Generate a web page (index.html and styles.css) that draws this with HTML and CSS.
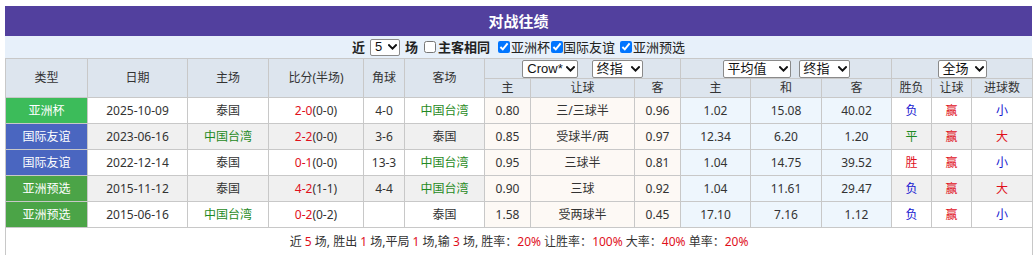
FILE: index.html
```html
<!DOCTYPE html>
<html lang="zh-CN">
<head>
<meta charset="utf-8">
<title>对战往绩</title>
<link rel="stylesheet" href="styles.css">
</head>
<body>
<div class="panel">
  <div class="title">对战往绩</div>
  <div class="filter">
    <b class="f-near">近</b>
    <span class="sel sel-n">5<svg class="chev" viewBox="0 0 9 6" width="9" height="6"><polyline points="1,1.1 4.5,4.6 8,1.1"/></svg></span>
    <b class="f-chang">场</b>
    <label class="chk chk-same"><input type="checkbox"><b>主客相同</b></label>
    <label class="chk chk-cup"><input type="checkbox" checked>亚洲杯</label>
    <label class="chk chk-fr"><input type="checkbox" checked>国际友谊</label>
    <label class="chk chk-q"><input type="checkbox" checked>亚洲预选</label>
  </div>
  <table class="grid">
    <colgroup>
      <col class="c-type"><col class="c-date"><col class="c-home"><col class="c-score"><col class="c-corner"><col class="c-away">
      <col class="c-o1"><col class="c-hc"><col class="c-o1">
      <col class="c-o2"><col class="c-o2m"><col class="c-o2">
      <col class="c-r"><col class="c-r"><col class="c-goal">
    </colgroup>
    <thead>
      <tr class="h1">
        <th rowspan="2">类型</th>
        <th rowspan="2">日期</th>
        <th rowspan="2">主场</th>
        <th rowspan="2">比分(半场)</th>
        <th rowspan="2">角球</th>
        <th rowspan="2">客场</th>
        <th colspan="3"><div class="sels gap14"><span class="sel w52"><span class="st">Crow*</span><svg class="chev" viewBox="0 0 9 6" width="9" height="6"><polyline points="1,1.1 4.5,4.6 8,1.1"/></svg></span><span class="sel w51"><span class="st">终指</span><svg class="chev" viewBox="0 0 9 6" width="9" height="6"><polyline points="1,1.1 4.5,4.6 8,1.1"/></svg></span></div></th>
        <th colspan="3"><div class="sels gap8"><span class="sel w68"><span class="st">平均值</span><svg class="chev" viewBox="0 0 9 6" width="9" height="6"><polyline points="1,1.1 4.5,4.6 8,1.1"/></svg></span><span class="sel w51"><span class="st">终指</span><svg class="chev" viewBox="0 0 9 6" width="9" height="6"><polyline points="1,1.1 4.5,4.6 8,1.1"/></svg></span></div></th>
        <th colspan="3"><div class="sels"><span class="sel w49"><span class="st">全场</span><svg class="chev" viewBox="0 0 9 6" width="9" height="6"><polyline points="1,1.1 4.5,4.6 8,1.1"/></svg></span></div></th>
      </tr>
      <tr class="h2">
        <th>主</th><th>让球</th><th>客</th>
        <th>主</th><th>和</th><th>客</th>
        <th>胜负</th><th>让球</th><th>进球数</th>
      </tr>
    </thead>
    <tbody>
      <tr>
        <td class="type t-cup">亚洲杯</td>
        <td>2025-10-09</td>
        <td>泰国</td>
        <td><span class="red">2-0</span>(0-0)</td>
        <td>4-0</td>
        <td class="green">中国台湾</td>
        <td class="o1">0.80</td><td class="o1">三/三球半</td><td class="o1">0.96</td>
        <td class="o2">1.02</td><td class="o2">15.08</td><td class="o2">40.02</td>
        <td class="blue">负</td><td class="red">赢</td><td class="blue">小</td>
      </tr>
      <tr class="alt">
        <td class="type t-friendly">国际友谊</td>
        <td>2023-06-16</td>
        <td class="green">中国台湾</td>
        <td><span class="red">2-2</span>(0-0)</td>
        <td>3-6</td>
        <td>泰国</td>
        <td class="o1">0.85</td><td class="o1">受球半/两</td><td class="o1">0.97</td>
        <td class="o2">12.34</td><td class="o2">6.20</td><td class="o2">1.20</td>
        <td class="green">平</td><td class="red">赢</td><td class="red">大</td>
      </tr>
      <tr>
        <td class="type t-friendly">国际友谊</td>
        <td>2022-12-14</td>
        <td>泰国</td>
        <td><span class="red">0-1</span>(0-0)</td>
        <td>13-3</td>
        <td class="green">中国台湾</td>
        <td class="o1">0.95</td><td class="o1">三球半</td><td class="o1">0.81</td>
        <td class="o2">1.04</td><td class="o2">14.75</td><td class="o2">39.52</td>
        <td class="red">胜</td><td class="red">赢</td><td class="blue">小</td>
      </tr>
      <tr class="alt">
        <td class="type t-qual">亚洲预选</td>
        <td>2015-11-12</td>
        <td>泰国</td>
        <td><span class="red">4-2</span>(1-1)</td>
        <td>4-4</td>
        <td class="green">中国台湾</td>
        <td class="o1">0.90</td><td class="o1">三球</td><td class="o1">0.92</td>
        <td class="o2">1.04</td><td class="o2">11.61</td><td class="o2">29.47</td>
        <td class="blue">负</td><td class="red">赢</td><td class="red">大</td>
      </tr>
      <tr>
        <td class="type t-qual">亚洲预选</td>
        <td>2015-06-16</td>
        <td class="green">中国台湾</td>
        <td><span class="red">0-2</span>(0-2)</td>
        <td></td>
        <td>泰国</td>
        <td class="o1">1.58</td><td class="o1">受两球半</td><td class="o1">0.45</td>
        <td class="o2">17.10</td><td class="o2">7.16</td><td class="o2">1.12</td>
        <td class="blue">负</td><td class="red">赢</td><td class="blue">小</td>
      </tr>
      <tr class="foot">
        <td colspan="15">近 <span class="red">5</span> 场, 胜出 <span class="red">1</span> 场,平局 <span class="red">1</span> 场,输 <span class="red">3</span> 场, 胜率：<span class="red">20%</span> 让胜率：<span class="red">100%</span> 大率：<span class="red">40%</span> 单率：<span class="red">20%</span></td>
      </tr>
    </tbody>
  </table>
</div>
</body>
</html>
```

FILE: styles.css
```css
* { box-sizing: border-box; }
html, body { margin: 0; padding: 0; background: #fff; }
body {
  font-family: "Noto Sans", "Noto Sans CJK SC", sans-serif;
  font-size: 12px;
  color: #333;
}
.panel {
  width: 1027px;
  margin: 6px 0 0 5px;
}
.title {
  height: 30px;
  background: #52409e;
  color: #fff;
  font-size: 15px;
  font-weight: bold;
  text-align: center;
  line-height: 30px;
}
.filter {
  height: 22px;
  background: #e7f0fa;
  display: flex;
  align-items: center;
  justify-content: center;
  font-size: 13px;
  color: #222;
  line-height: 16px;
}
.filter b { font-weight: bold; color: #222; }
.f-near { margin-right: 5px; }
.f-chang { margin-left: 5px; }
.chk { display: inline-flex; align-items: center; }
.chk input {
  width: 12px;
  height: 12px;
  margin: 0 1px 0 0;
}
.chk-same { margin-left: 6px; }
.chk-same input { margin-right: 2px; }
.chk-cup { margin-left: 8px; }
.chk-fr { margin-left: 1px; }
.chk-fr input { margin-right: 0; }
.chk-q { margin-left: 5px; }
.sel {
  display: inline-flex;
  align-items: center;
  justify-content: space-between;
  gap: 3px;
  height: 18px;
  padding: 0 1px 0 4px;
  background: #fff;
  border: 1px solid #8a8a8a;
  border-radius: 2px;
  font-family: "Liberation Sans", "Noto Sans CJK SC", sans-serif;
  font-size: 13px;
  color: #111;
  line-height: 16px;
  white-space: nowrap;
}
.st { flex: none; }
.sel-n { width: 30px; height: 17px; padding-left: 4px; }
.w52 { min-width: 52px; }
.w51 { min-width: 51px; }
.w68 { min-width: 68px; }
.w49 { min-width: 49px; }
.chev {
  fill: none;
  stroke: #111;
  stroke-width: 2;
  stroke-linecap: square;
  flex: none;
  margin-right: 1px;
}
.sels {
  display: flex;
  justify-content: center;
  align-items: center;
}
.gap14 { gap: 14px; }
.gap8 { gap: 8px; }

.grid {
  width: 1027px;
  border-collapse: collapse;
  table-layout: fixed;
}
.c-type { width: 82px; }
.c-date { width: 100px; }
.c-home { width: 81px; }
.c-score { width: 95px; }
.c-corner { width: 41px; }
.c-away { width: 80px; }
.c-o1 { width: 46px; }
.c-hc { width: 104px; }
.c-o2 { width: 70px; }
.c-o2m { width: 71px; }
.c-r { width: 40px; }
.c-goal { width: 61px; }

.grid th, .grid td {
  border: 1px solid #c8c8c8;
  text-align: center;
  padding: 0;
  white-space: nowrap;
  line-height: 16px;
}
.grid th {
  background: #dde5ee;
  font-weight: normal;
  color: #333;
}
.h1 th { height: 20px; }
.h2 th { height: 19px; }
.grid td { height: 26px; background: #fff; }
.grid tr.alt td { background: #f0f0f0; }
.grid tr td.o1 { background: #fdf9f5; }
.grid tr td.o2 { background: #eef6fd; }
.grid tr td.type { color: #fff; }
.grid tr td.t-cup { background: #3cbc5a; }
.grid tr td.t-friendly { background: #4a66c0; }
.grid tr td.t-qual { background: #4ba447; }
.red { color: #e0101c; }
.green { color: #1f8a23; }
.blue { color: #1515d0; }
.grid tr.foot td { height: 28px; background: #fff; }
```
